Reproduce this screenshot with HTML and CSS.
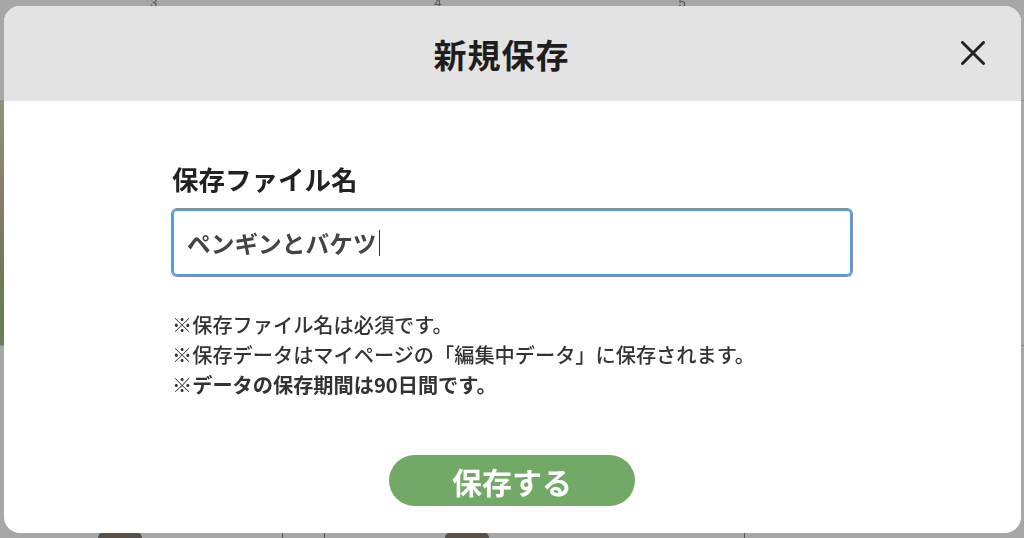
FILE: index.html
```html
<!DOCTYPE html>
<html lang="ja">
<head>
<meta charset="utf-8">
<title>新規保存</title>
<link rel="stylesheet" href="styles.css">
</head>
<body>
<div class="page">
  <div class="page-top">
    <span class="num">3</span>
    <span class="num">4</span>
    <span class="num">5</span>
  </div>
  <div class="page-row">
    <div class="photo"></div>
  </div>
  <div class="page-bottom">
    <span class="circle c1"></span>
    <span class="vline v1"></span>
    <span class="vline v2"></span>
    <span class="circle c2"></span>
    <span class="vline v3"></span>
  </div>
</div>

<div class="overlay">
  <div class="modal">
    <div class="modal-head">
      <h1 class="modal-title">新規保存</h1>
      <button class="close" aria-label="閉じる">
        <svg width="24" height="24" viewBox="0 0 24 24"><path d="M1.5 1.5 L22.5 22.5 M22.5 1.5 L1.5 22.5" stroke="#222" stroke-width="3" stroke-linecap="round" fill="none"/></svg>
      </button>
    </div>
    <div class="modal-body">
      <div class="form">
        <label class="label">保存ファイル名</label>
        <div class="field"><span class="field-text">ペンギンとバケツ</span><span class="caret"></span></div>
        <ul class="notes">
          <li>※保存ファイル名は必須です。</li>
          <li>※保存データはマイページの「編集中データ」に保存されます。</li>
          <li class="strong">※データの保存期間は90日間です。</li>
        </ul>
      </div>
      <button class="save">保存する</button>
    </div>
  </div>
</div>
</body>
</html>
```

FILE: styles.css
```css
* { box-sizing: border-box; }
html, body {
  margin: 0;
  padding: 0;
  width: 1024px;
  height: 538px;
  overflow: hidden;
}
body {
  background: #a7a7a7;
  font-family: "Noto Sans CJK JP", "Noto Sans", sans-serif;
  color: #222;
}

/* dimmed page behind the modal */
.page {
  width: 1024px;
  height: 538px;
  display: flex;
  flex-direction: column;
}
.page-top {
  height: 101px;
  display: flex;
  align-items: flex-start;
  border-bottom: 1px solid #8e8e8e;
}
.num {
  font-family: "Liberation Sans", sans-serif;
  font-size: 13px;
  line-height: 6px;
  color: #555;
}
.num:nth-child(1) { margin-left: 150px; }
.num:nth-child(2) { margin-left: 277px; }
.num:nth-child(3) { margin-left: 237px; }
.page-row {
  height: 244px;
  display: flex;
}
.photo {
  width: 4px;
  height: 100%;
  background: linear-gradient(180deg, #8d957a 0%, #857c6b 40%, #6e7b52 75%, #6b7d52 100%);
}
.page-bottom {
  flex: 1;
  display: flex;
  align-items: flex-end;
  border-top: 1px solid #8f8f8f;
}
.vline { width: 1px; height: 10px; background: #555; }
.v1 { margin-left: 140px; }
.v2 { margin-left: 41px; }
.v3 { margin-left: 255px; }
.circle {
  width: 44px;
  height: 6px;
  border-radius: 22px 22px 0 0;
  background: #5a5048;
}
.c1 { margin-left: 98px; }
.c2 { margin-left: 120px; }

/* modal */
.overlay {
  position: fixed;
  inset: 0;
  display: flex;
  justify-content: center;
  padding-top: 6px;
}
.modal {
  width: 1017px;
  height: 527px;
  background: #fff;
  border-radius: 16px;
  overflow: hidden;
  display: flex;
  flex-direction: column;
}
.modal-head {
  height: 95px;
  background: #e3e3e3;
  display: flex;
  align-items: center;
  justify-content: center;
  padding-right: 21px;
  position: relative;
  flex-shrink: 0;
}
.modal-title {
  margin: 0;
  font-size: 33px;
  font-weight: 700;
  color: #1e1e1e;
  letter-spacing: 1px;
}
.close {
  position: absolute;
  right: 36px;
  top: 35px;
  width: 24px;
  height: 24px;
  padding: 0;
  border: 0;
  background: none;
  display: flex;
}
.modal-body {
  flex: 1;
  display: flex;
  flex-direction: column;
  align-items: center;
  padding-top: 60px;
}
.form {
  width: 680px;
  display: flex;
  flex-direction: column;
}
.label {
  font-size: 26.5px;
  font-weight: 700;
  line-height: 36px;
  color: #222;
}
.field {
  margin-top: 12px;
  height: 67px;
  border: 2px solid #4b9ef2;
  border-radius: 5px;
  box-shadow: 0 0 0 1px #8c8c8c;
  display: flex;
  align-items: center;
  padding-left: 13px;
}
.field-text {
  font-size: 23.7px;
  font-weight: 700;
  color: #444;
}
.caret {
  width: 1px;
  height: 26px;
  background: #333;
  margin-left: 2px;
}
.notes {
  list-style: none;
  margin: 34px 0 0;
  padding: 0;
  font-size: 20.2px;
  line-height: 30px;
  font-weight: 500;
  color: #333;
}
.notes .strong { font-weight: 700; }
.save {
  margin-top: 55px;
  width: 246px;
  height: 51px;
  border: 0;
  border-radius: 26px;
  background: #72a966;
  color: #fff;
  font-family: "Noto Sans CJK JP", "Noto Sans", sans-serif;
  font-size: 30px;
  font-weight: 700;
  line-height: 1;
  padding: 0;
}
```
